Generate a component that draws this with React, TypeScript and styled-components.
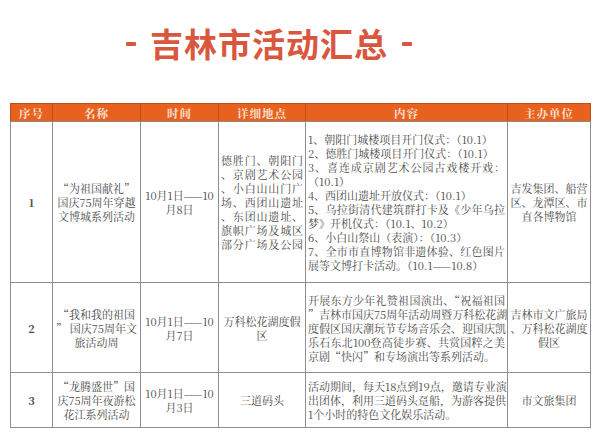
import React from "react";
import styled, { createGlobalStyle } from "styled-components";

const Global = createGlobalStyle`
  html, body { margin: 0; padding: 0; background: #ffffff; }
  body { font-family: "Noto Serif CJK SC", "Noto Sans CJK SC", serif; }
`;

const Page = styled.div`
  width: 600px;
  height: 438px;
  overflow: hidden;
  background: #fff;
  display: flex;
  flex-direction: column;
  align-items: center;
`;

const TitleBar = styled.div`
  height: 103px;
  width: 100%;
  display: flex;
  justify-content: center;
  align-items: flex-start;
  padding-top: 25px;
  padding-right: 62px;
  box-sizing: border-box;
  gap: 14px;
`;

const Dash = styled.span`
  display: block;
  width: 10px;
  height: 4px;
  background: #d9573f;
  margin-top: 17px;
  border-radius: 1px;
`;

const Title = styled.h1`
  margin: 0;
  font-family: "Noto Sans CJK SC", sans-serif;
  font-weight: 700;
  font-size: 33px;
  line-height: 37px;
  letter-spacing: 1px;
  color: #d9573f;
`;

const Table = styled.table`
  width: 580px;
  border-collapse: collapse;
  table-layout: fixed;
  margin-left: 1px;
`;

const HeadRow = styled.tr`
  height: 18px;
  background: #e8611f;
`;

const HeadCell = styled.th`
  padding: 0;
  border: 1px solid #b8501c;
  border-bottom-color: #8a8a8a;
  color: #fbe3d6;
  font-size: 11.5px;
  font-weight: 700;
  line-height: 16px;
  text-align: center;
  letter-spacing: 1px;
`;

const BodyRow = styled.tr<{ $h: number }>`
  height: ${(p) => p.$h}px;
`;

const Cell = styled.td<{ $align?: "left" | "center"; $bold?: boolean }>`
  border: 1px solid #8e8e8e;
  padding: 0 2px;
  vertical-align: middle;
  text-align: ${(p) => p.$align || "center"};
  color: #4a4a4a;
  font-size: 11px;
  line-height: 14px;
  font-weight: ${(p) => (p.$bold ? 700 : 400)};
`;

const Line = styled.span<{ $justify?: boolean }>`
  display: block;
  height: 14px;
  white-space: nowrap;
  text-align: ${(p) => (p.$justify ? "justify" : "inherit")};
  text-align-last: ${(p) => (p.$justify ? "justify" : "auto")};
`;

type L = string | [string, boolean];

const Lines: React.FC<{ lines: L[] }> = ({ lines }) => (
  <>
    {lines.map((l, i) => {
      const text = typeof l === "string" ? l : l[0];
      const j = typeof l === "string" ? false : l[1];
      return (
        <Line key={i} $justify={j}>
          {text}
        </Line>
      );
    })}
  </>
);

const widths = [42, 88, 78, 87, 202, 83];
const heads = ["序号", "名称", "时间", "详细地点", "内容", "主办单位"];

interface RowData {
  h: number;
  no: string;
  name: string[];
  time: string[];
  place: L[];
  placeAlign: "left" | "center";
  content: L[];
  org: string[];
}

const rows: RowData[] = [
  {
    h: 161,
    no: "1",
    name: ["“为祖国献礼”", "国庆75周年穿越", "文博城系列活动"],
    time: ["10月1日——10", "月8日"],
    place: [
      ["德胜门、朝阳门", true],
      ["、京剧艺术公园", true],
      ["、小白山山门广", true],
      ["场、西团山遗址", true],
      ["、东团山遗址、", true],
      ["旗帜广场及城区", true],
      ["部分广场及公园", true],
    ],
    placeAlign: "left",
    content: [
      ["1、朝阳门城楼项目开门仪式：（10.1）", false],
      ["2、德胜门城楼项目开门仪式：（10.1）", false],
      ["3、喜连成京剧艺术公园古戏楼开戏：", true],
      ["（10.1）", false],
      ["4、西团山遗址开放仪式：（10.1）", false],
      ["5、乌拉街清代建筑群打卡及《少年乌拉", true],
      ["梦》开机仪式：（10.1、10.2）", false],
      ["6、小白山祭山（表演）：（10.3）", false],
      ["7、全市市直博物馆非遗体验、红色图片", true],
      ["展等文博打卡活动。（10.1——10.8）", false],
    ],
    org: ["吉发集团、船营", "区、龙潭区、市", "直各博物馆"],
  },
  {
    h: 90,
    no: "2",
    name: ["“我和我的祖国", "” 国庆75周年文", "旅活动周"],
    time: ["10月1日——10", "月7日"],
    place: ["万科松花湖度假", "区"],
    placeAlign: "center",
    content: [
      ["开展东方少年礼赞祖国演出、“祝福祖国", true],
      ["”吉林市国庆75周年活动周暨万科松花湖", true],
      ["度假区国庆潮玩节专场音乐会、迎国庆凯", true],
      ["乐石东北100登高徒步赛、共赏国粹之美", true],
      ["京剧“快闪”和专场演出等系列活动。", false],
    ],
    org: ["吉林市文广旅局", "、万科松花湖度", "假区"],
  },
  {
    h: 55,
    no: "3",
    name: ["“龙腾盛世”国", "庆75周年夜游松", "花江系列活动"],
    time: ["10月1日——10", "月3日"],
    place: ["三道码头"],
    placeAlign: "center",
    content: [
      ["活动期间，每天18点到19点，邀请专业演", true],
      ["出团体，利用三道码头趸船，为游客提供", true],
      ["1个小时的特色文化娱乐活动。", false],
    ],
    org: ["市文旅集团"],
  },
];

export default function App() {
  return (
    <>
      <Global />
      <Page>
        <TitleBar>
          <Dash />
          <Title>吉林市活动汇总</Title>
          <Dash />
        </TitleBar>
        <Table>
          <colgroup>
            {widths.map((w, i) => (
              <col key={i} style={{ width: w }} />
            ))}
          </colgroup>
          <thead>
            <HeadRow>
              {heads.map((h) => (
                <HeadCell key={h}>{h}</HeadCell>
              ))}
            </HeadRow>
          </thead>
          <tbody>
            {rows.map((r) => (
              <BodyRow key={r.no} $h={r.h}>
                <Cell $bold>{r.no}</Cell>
                <Cell>
                  <Lines lines={r.name} />
                </Cell>
                <Cell>
                  <Lines lines={r.time} />
                </Cell>
                <Cell $align={r.placeAlign}>
                  <Lines lines={r.place} />
                </Cell>
                <Cell $align="left">
                  <Lines lines={r.content} />
                </Cell>
                <Cell>
                  <Lines lines={r.org} />
                </Cell>
              </BodyRow>
            ))}
          </tbody>
        </Table>
      </Page>
    </>
  );
}
